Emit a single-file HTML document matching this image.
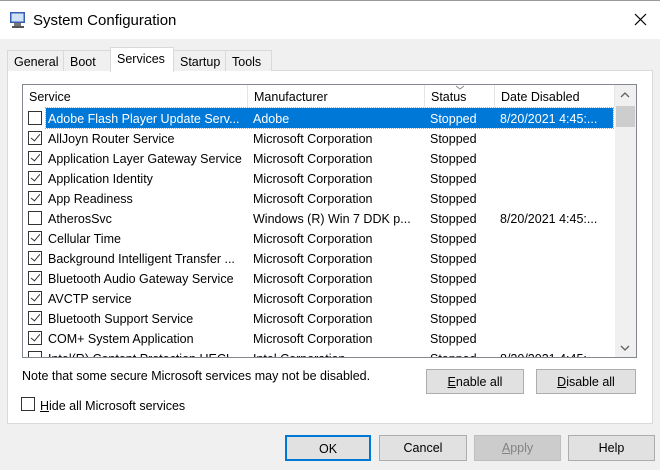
<!DOCTYPE html>
<html><head><style>
*{box-sizing:border-box;margin:0;padding:0}
body{width:660px;height:470px;background:#f0f0f0;font-family:"Liberation Sans",sans-serif;font-size:12px;color:#000;position:relative;overflow:hidden}
.abs{position:absolute}
.title{left:0;top:0;width:660px;height:39px;background:#fff;border-top:1px solid #999}
.tab{position:absolute;top:50px;height:21px;border:1px solid #d9d9d9;border-bottom:none;background:#f0f0f0;padding:4px 6px 0;font-size:12.5px}
.panel{left:7px;top:70px;width:646px;height:354px;background:#fff;border:1px solid #d9d9d9}
.list{left:22px;top:84px;width:615px;height:274px;border:1px solid #828790;background:#fff;overflow:hidden}
.hdr{position:absolute;top:0;height:22px;font-size:12.5px;padding:5px 0 0 6px;border-right:1px solid #e5e5e5}
.row{position:absolute;left:0;width:592px;height:20px;font-size:12.5px}
.row span{position:absolute;top:4px;white-space:nowrap}
.cb{position:absolute;left:5px;top:3px;width:14px;height:14px;border:1px solid #333;background:#fff}
.cb.c::after{content:"";position:absolute;left:4px;top:0px;width:4px;height:8px;border:solid #333;border-width:0 1.3px 1.3px 0;transform:rotate(40deg)}
.sel{position:absolute;left:23px;width:567px;height:20px;background:#0078d7;outline:1px dotted #f0a040}
.btn{position:absolute;height:25px;background:#e1e1e1;border:1px solid #adadad;text-align:center;font-size:12.5px;line-height:25px}
</style></head><body>
<div class="abs title"></div>
<svg class="abs" style="left:9px;top:11px" width="18" height="18" viewBox="0 0 18 18"><rect x="1" y="1" width="15" height="11" fill="#3a5fb0"/><rect x="2.5" y="2.5" width="12" height="8" fill="#cfe2f7"/><rect x="5" y="12" width="7" height="3" fill="#777"/><rect x="3" y="15" width="12" height="2" fill="#555"/></svg>
<div class="abs" style="left:33px;top:12px;font-size:15px">System Configuration</div>
<svg class="abs" style="left:634px;top:13px" width="13" height="13"><path d="M1 1L12 12M12 1L1 12" stroke="#000" stroke-width="1.2"/></svg>
<div class="abs panel"></div>
<div class="tab" style="left:7px;width:57px">General</div>
<div class="tab" style="left:63px;width:48px">Boot</div>
<div class="tab" style="left:173px;width:53px">Startup</div>
<div class="tab" style="left:225px;width:47px">Tools</div>
<div class="tab" style="left:110px;top:47px;width:64px;height:25px;background:#fff;padding-top:4px">Services</div>
<div class="abs list">
<div class="hdr" style="left:0;width:225px">Service</div>
<div class="hdr" style="left:225px;width:177px">Manufacturer</div>
<div class="hdr" style="left:402px;width:70px">Status</div>
<div class="hdr" style="left:472px;width:120px">Date Disabled</div>
<svg class="abs" style="left:432px;top:0" width="10" height="5"><path d="M1 1L5 4L9 1" stroke="#888" fill="none"/></svg>
<div class="sel" style="top:23px"></div>
<div class="abs" style="left:592px;top:0;width:21px;height:272px;background:#f0f0f0"></div>
<div class="abs" style="left:593px;top:21px;width:19px;height:21px;background:#cdcdcd"></div>
<svg class="abs" style="left:597px;top:7px" width="10" height="6"><path d="M1 5L5 1L9 5" stroke="#606060" fill="none" stroke-width="1.3"/></svg>
<svg class="abs" style="left:597px;top:260px" width="10" height="6"><path d="M1 1L5 5L9 1" stroke="#606060" fill="none" stroke-width="1.3"/></svg>
</div>
<div class="abs" style="left:22px;top:369px;font-size:12.5px">Note that some secure Microsoft services may not be disabled.</div>
<div class="btn" style="left:426px;top:369px;width:98px"><u>E</u>nable all</div>
<div class="btn" style="left:536px;top:369px;width:100px"><u>D</u>isable all</div>
<div class="abs" style="left:21px;top:397px;width:14px;height:14px;border:1px solid #333;background:#fff"></div>
<div class="abs" style="left:40px;top:399px;font-size:12.5px"><u>H</u>ide all Microsoft services</div>
<div class="btn" style="left:285px;top:435px;width:86px;height:26px;border:2px solid #0078d7;line-height:24px">OK</div>
<div class="btn" style="left:379px;top:435px;width:88px;height:26px">Cancel</div>
<div class="btn" style="left:474px;top:435px;width:87px;height:26px;background:#ccc;border-color:#bfbfbf;color:#838383"><u>A</u>pply</div>
<div class="btn" style="left:568px;top:435px;width:87px;height:26px">Help</div>
<div class="abs list" style="background:transparent;border:none;left:23px;top:86px;width:590px;height:271px">
<div class="row" style="top:22px;color:#fff"><div class="cb"></div><span style="left:25px">Adobe Flash Player Update Serv...</span><span style="left:230px">Adobe</span><span style="left:407px">Stopped</span><span style="left:477px">8/20/2021 4:45:...</span></div>
<div class="row" style="top:42px"><div class="cb c"></div><span style="left:25px">AllJoyn Router Service</span><span style="left:230px">Microsoft Corporation</span><span style="left:407px">Stopped</span></div>
<div class="row" style="top:62px"><div class="cb c"></div><span style="left:25px">Application Layer Gateway Service</span><span style="left:230px">Microsoft Corporation</span><span style="left:407px">Stopped</span></div>
<div class="row" style="top:82px"><div class="cb c"></div><span style="left:25px">Application Identity</span><span style="left:230px">Microsoft Corporation</span><span style="left:407px">Stopped</span></div>
<div class="row" style="top:102px"><div class="cb c"></div><span style="left:25px">App Readiness</span><span style="left:230px">Microsoft Corporation</span><span style="left:407px">Stopped</span></div>
<div class="row" style="top:122px"><div class="cb"></div><span style="left:25px">AtherosSvc</span><span style="left:230px">Windows (R) Win 7 DDK p...</span><span style="left:407px">Stopped</span><span style="left:477px">8/20/2021 4:45:...</span></div>
<div class="row" style="top:142px"><div class="cb c"></div><span style="left:25px">Cellular Time</span><span style="left:230px">Microsoft Corporation</span><span style="left:407px">Stopped</span></div>
<div class="row" style="top:162px"><div class="cb c"></div><span style="left:25px">Background Intelligent Transfer ...</span><span style="left:230px">Microsoft Corporation</span><span style="left:407px">Stopped</span></div>
<div class="row" style="top:182px"><div class="cb c"></div><span style="left:25px">Bluetooth Audio Gateway Service</span><span style="left:230px">Microsoft Corporation</span><span style="left:407px">Stopped</span></div>
<div class="row" style="top:202px"><div class="cb c"></div><span style="left:25px">AVCTP service</span><span style="left:230px">Microsoft Corporation</span><span style="left:407px">Stopped</span></div>
<div class="row" style="top:222px"><div class="cb c"></div><span style="left:25px">Bluetooth Support Service</span><span style="left:230px">Microsoft Corporation</span><span style="left:407px">Stopped</span></div>
<div class="row" style="top:242px"><div class="cb c"></div><span style="left:25px">COM+ System Application</span><span style="left:230px">Microsoft Corporation</span><span style="left:407px">Stopped</span></div>
<div class="row" style="top:262px"><div class="cb"></div><span style="left:25px">Intel(R) Content Protection HECI ...</span><span style="left:230px">Intel Corporation</span><span style="left:407px">Stopped</span><span style="left:477px">8/20/2021 4:45:...</span></div>
</div>
</body></html>
